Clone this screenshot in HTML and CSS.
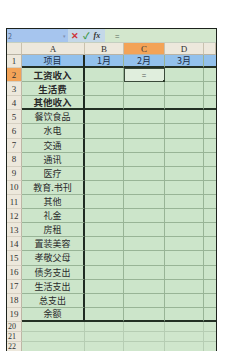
FILE: index.html
```html
<!DOCTYPE html>
<html lang="zh">
  <head>
    <meta charset="UTF-8" />
    <title>收支表</title>
    <link rel="stylesheet" href="styles.css">
  </head>
  <body>
    <div class="top"></div>
    <div class="window">
      <div class="formula">
        <div class="namebox"><span class="ref">2</span><span class="drop">▾</span></div>
        <div class="tools">
          <span class="x">✕</span>
          <span class="ok">✓</span>
          <span class="fx">fx</span>
        </div>
        <div class="input">=</div>
      </div>
      <div class="sheet">
        <!-- column headers -->
        <div class="corner"></div>
        <div class="ch">A</div>
        <div class="ch">B</div>
        <div class="ch on">C</div>
        <div class="ch">D</div>
        <div class="ch last"></div>

        <!-- row 1 -->
        <div class="rh">1</div>
        <div class="c a blue under">项目</div>
        <div class="c blue under">1月</div>
        <div class="c blue under">2月</div>
        <div class="c blue under">3月</div>
        <div class="c blue under last"></div>

        <div class="rh on">2</div>
        <div class="c a bold">工资收入</div>
        <div class="c"></div>
        <div class="c cur">=<i class="handle"></i></div>
        <div class="c"></div>
        <div class="c last"></div>

        <div class="rh">3</div>
        <div class="c a bold">生活费</div>
        <div class="c"></div>
        <div class="c"></div>
        <div class="c"></div>
        <div class="c last"></div>

        <div class="rh">4</div>
        <div class="c a bold under">其他收入</div>
        <div class="c under"></div>
        <div class="c under"></div>
        <div class="c under"></div>
        <div class="c under last"></div>

        <div class="rh">5</div>
        <div class="c a">餐饮食品</div>
        <div class="c"></div>
        <div class="c"></div>
        <div class="c"></div>
        <div class="c last"></div>

        <div class="rh">6</div>
        <div class="c a">水电</div>
        <div class="c"></div>
        <div class="c"></div>
        <div class="c"></div>
        <div class="c last"></div>

        <div class="rh">7</div>
        <div class="c a">交通</div>
        <div class="c"></div>
        <div class="c"></div>
        <div class="c"></div>
        <div class="c last"></div>

        <div class="rh">8</div>
        <div class="c a">通讯</div>
        <div class="c"></div>
        <div class="c"></div>
        <div class="c"></div>
        <div class="c last"></div>

        <div class="rh">9</div>
        <div class="c a">医疗</div>
        <div class="c"></div>
        <div class="c"></div>
        <div class="c"></div>
        <div class="c last"></div>

        <div class="rh">10</div>
        <div class="c a">教育.书刊</div>
        <div class="c"></div>
        <div class="c"></div>
        <div class="c"></div>
        <div class="c last"></div>

        <div class="rh">11</div>
        <div class="c a">其他</div>
        <div class="c"></div>
        <div class="c"></div>
        <div class="c"></div>
        <div class="c last"></div>

        <div class="rh">12</div>
        <div class="c a">礼金</div>
        <div class="c"></div>
        <div class="c"></div>
        <div class="c"></div>
        <div class="c last"></div>

        <div class="rh">13</div>
        <div class="c a">房租</div>
        <div class="c"></div>
        <div class="c"></div>
        <div class="c"></div>
        <div class="c last"></div>

        <div class="rh">14</div>
        <div class="c a">置装美容</div>
        <div class="c"></div>
        <div class="c"></div>
        <div class="c"></div>
        <div class="c last"></div>

        <div class="rh">15</div>
        <div class="c a">孝敬父母</div>
        <div class="c"></div>
        <div class="c"></div>
        <div class="c"></div>
        <div class="c last"></div>

        <div class="rh">16</div>
        <div class="c a">债务支出</div>
        <div class="c"></div>
        <div class="c"></div>
        <div class="c"></div>
        <div class="c last"></div>

        <div class="rh">17</div>
        <div class="c a">生活支出</div>
        <div class="c"></div>
        <div class="c"></div>
        <div class="c"></div>
        <div class="c last"></div>

        <div class="rh">18</div>
        <div class="c a">总支出</div>
        <div class="c"></div>
        <div class="c"></div>
        <div class="c"></div>
        <div class="c last"></div>

        <div class="rh">19</div>
        <div class="c a under">余额</div>
        <div class="c under"></div>
        <div class="c under"></div>
        <div class="c under"></div>
        <div class="c under last"></div>

        <!-- empty rows -->
        <div class="rh small">20</div>
        <div class="c e"></div>
        <div class="c e"></div>
        <div class="c e"></div>
        <div class="c e"></div>
        <div class="c e last"></div>

        <div class="rh small">21</div>
        <div class="c e"></div>
        <div class="c e"></div>
        <div class="c e"></div>
        <div class="c e"></div>
        <div class="c e last"></div>

        <div class="rh small">22</div>
        <div class="c e"></div>
        <div class="c e"></div>
        <div class="c e"></div>
        <div class="c e"></div>
        <div class="c e last"></div>
      </div>
    </div>
  </body>
</html>
```

FILE: styles.css
```css
body {
  margin: 0;
  background: #fff;
  font-family: "Noto Sans CJK SC", "Noto Sans", sans-serif;
  overflow: hidden;
}
.top {
  height: 28px;
}
.window {
  margin-left: 6px;
  width: 211px;
  border: 1px solid #1c221c;
  border-bottom: none;
  box-sizing: border-box;
}
.formula {
  display: flex;
  height: 13px;
  background: #d3e7cd;
  border-bottom: 1px solid #c5cfc0;
}
.namebox {
  width: 61px;
  background: #a6c5ee;
  display: flex;
  justify-content: space-between;
  align-items: center;
  padding: 0 2px 0 1px;
  box-sizing: border-box;
  font-size: 7px;
  color: #4a5f86;
}
.drop {
  font-size: 5px;
  color: #8090b0;
}
.tools {
  display: flex;
  align-items: center;
  gap: 4px;
  width: 34px;
  padding-left: 3px;
  background: #c4d8e8;
  font-size: 9px;
  line-height: 1;
}
.x {
  color: #d0343a;
  font-weight: bold;
}
.ok {
  color: #3f9a4a;
  font-weight: bold;
}
.fx {
  font-family: "Liberation Serif", serif;
  font-style: italic;
  font-weight: bold;
  font-size: 8px;
  color: #333;
}
.input {
  flex: 1;
  padding-left: 10px;
  font-size: 8px;
  line-height: 13px;
  color: #5a6a5a;
}
.sheet {
  display: grid;
  grid-template-columns: 15px 63px 39px 41px 39px 12px;
  grid-template-rows: 12px 13px repeat(18, 14.11px) 10px 10px 10px;
}
.corner,
.ch,
.rh {
  background: #ede8dc;
  font-family: "Liberation Serif", serif;
  color: #333;
  box-sizing: border-box;
  display: flex;
  align-items: center;
  justify-content: center;
}
.corner,
.ch {
  border-right: 1px solid #c9c1ae;
  border-bottom: 1px solid #b9b3a4;
  font-size: 9px;
}
.rh {
  border-right: 1px solid #bdb6a5;
  border-bottom: 1px solid #d6d0c2;
  font-size: 9px;
}
.rh.small {
  font-size: 8px;
  justify-content: flex-start;
  padding-left: 1px;
}
.ch.on,
.rh.on {
  background: #f3a357;
}
.c {
  background: #cce5ca;
  border-right: 1px solid #98b496;
  border-bottom: 1px solid #98b496;
  box-sizing: border-box;
  display: flex;
  align-items: center;
  justify-content: center;
  font-size: 9px;
  color: #2a2a2a;
  position: relative;
}
.c.last {
  border-right: none;
}
.c.a {
  border-right: 2px solid #1f2b22;
}
.c.blue {
  background: #93c1ec;
  color: #1d2e48;
  font-size: 9px;
}
.c.under {
  border-bottom: 2px solid #233024;
}
.bold {
  font-weight: bold;
  font-size: 9.5px;
}
.c.e {
  background: #cfe6cc;
  border-right: 1px solid #b6cdb3;
  border-bottom: 1px solid #b6cdb3;
}
.c.e.last {
  border-right: none;
}
.cur {
  background: #e0eedd;
  outline: 1px solid #3a4a3a;
  outline-offset: -1px;
  font-size: 8px;
  color: #555;
}
.handle {
  position: absolute;
  right: -2px;
  bottom: -2px;
  width: 3px;
  height: 3px;
  background: #2a3a2a;
}
```
